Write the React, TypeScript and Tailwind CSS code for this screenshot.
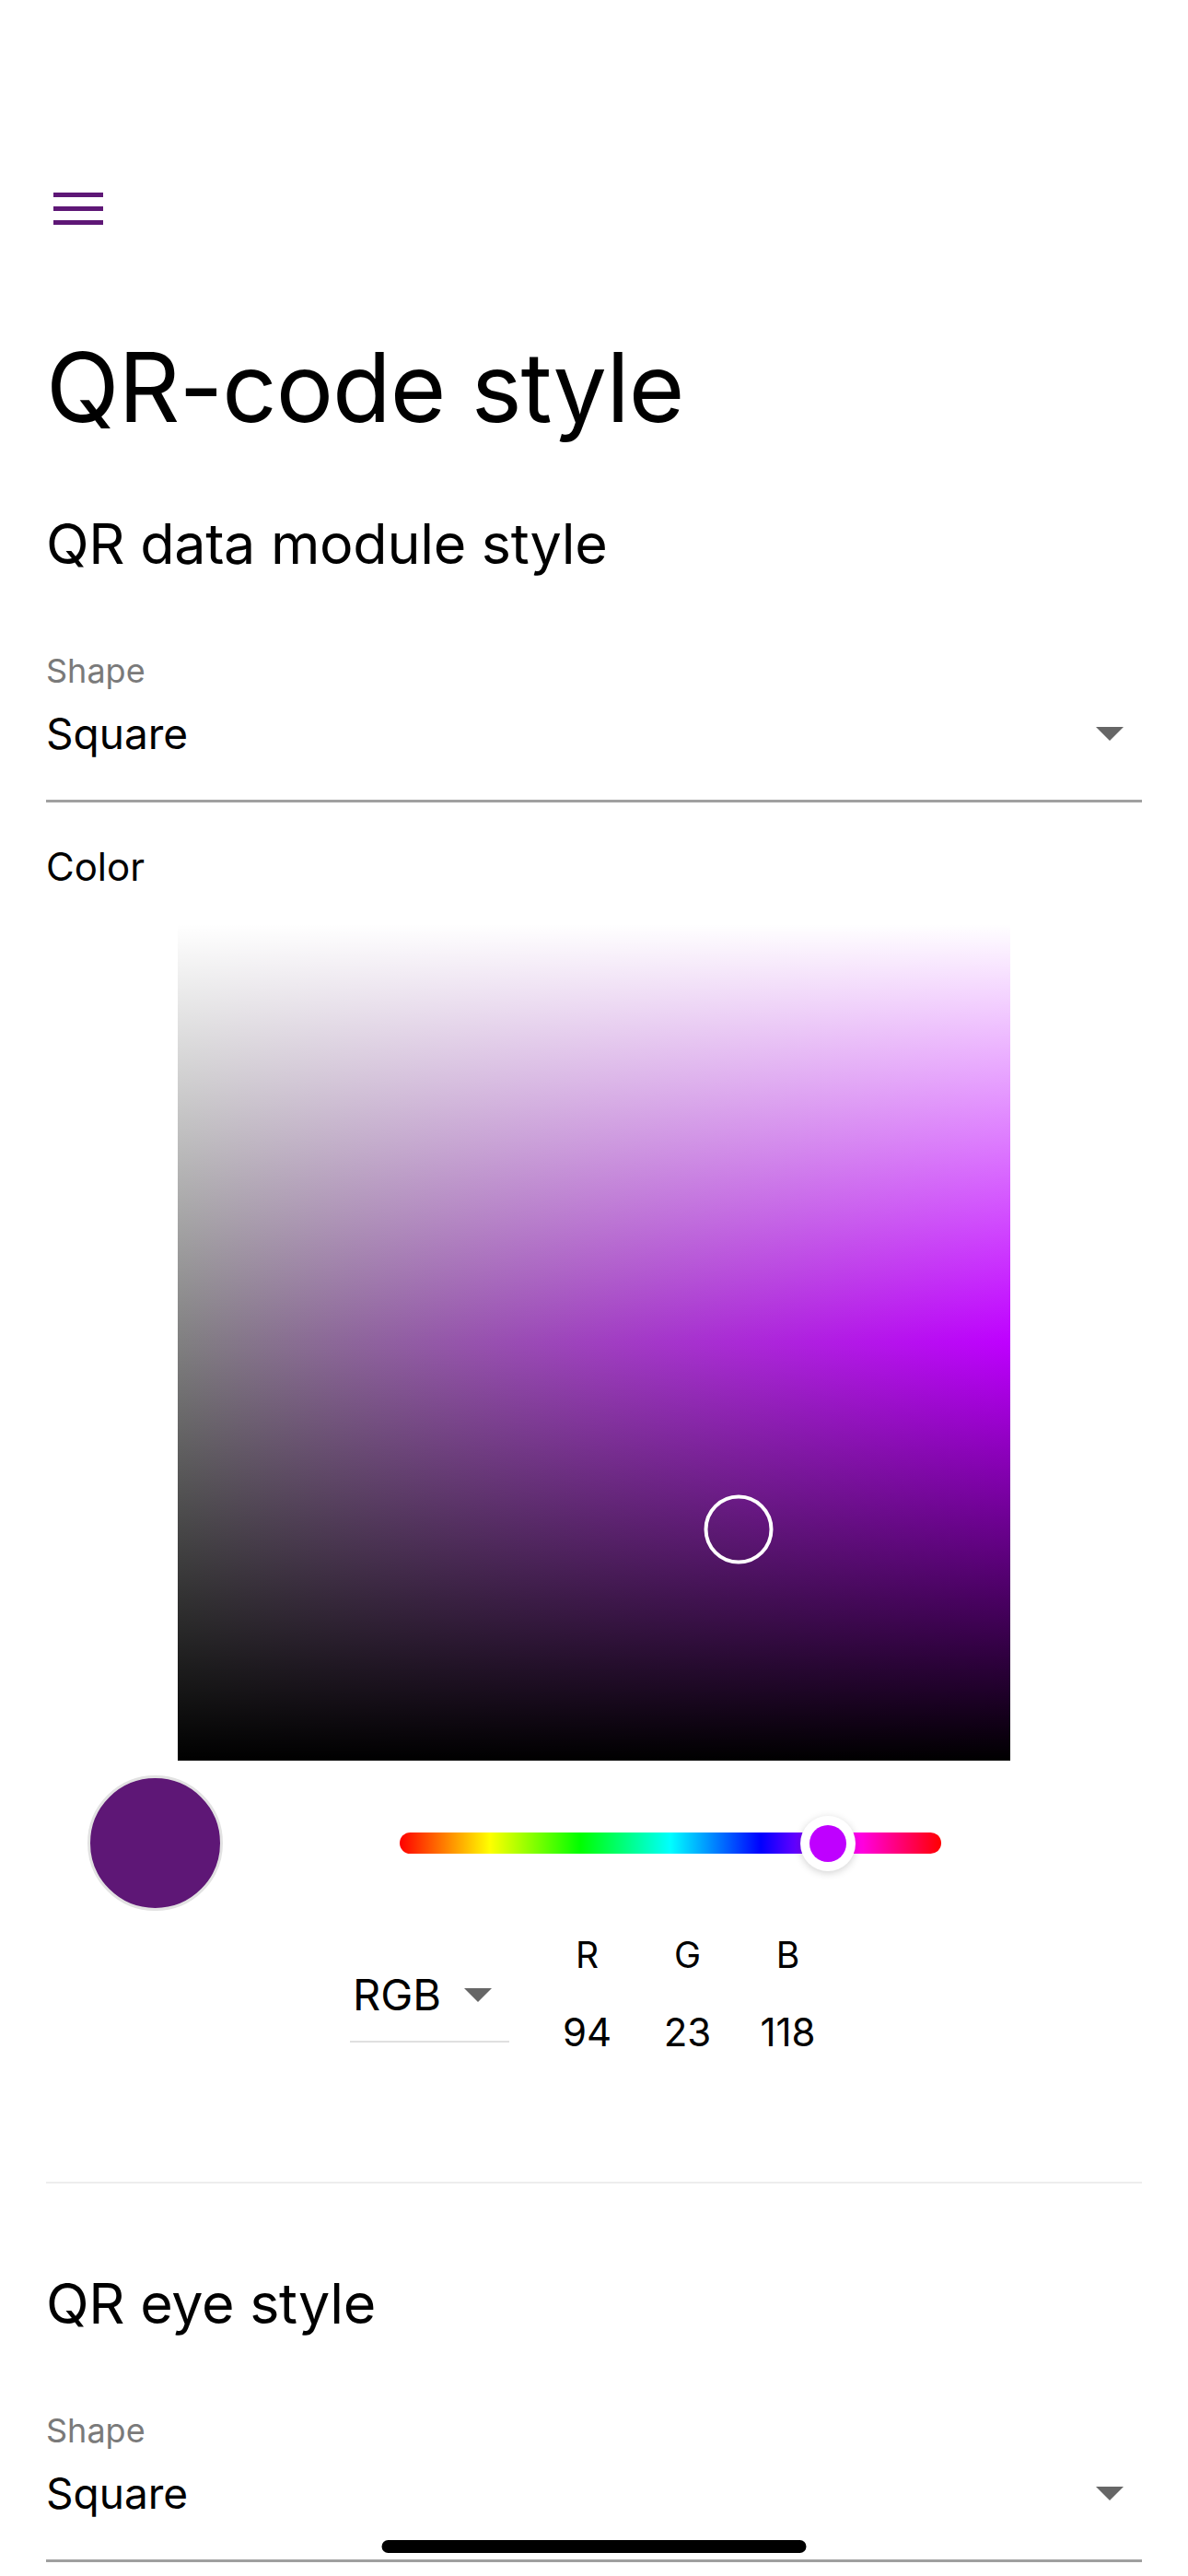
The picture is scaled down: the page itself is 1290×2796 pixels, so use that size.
import React from "react";

const picked = { r: 94, g: 23, b: 118 };

function toHsl(r: number, g: number, b: number) {
  const rn = r / 255;
  const gn = g / 255;
  const bn = b / 255;
  const max = Math.max(rn, gn, bn);
  const min = Math.min(rn, gn, bn);
  const l = (max + min) / 2;
  const d = max - min;
  let h = 0;
  let s = 0;
  if (d !== 0) {
    s = d / (1 - Math.abs(2 * l - 1));
    if (max === rn) h = 60 * (((gn - bn) / d) % 6);
    else if (max === gn) h = 60 * ((bn - rn) / d + 2);
    else h = 60 * ((rn - gn) / d + 4);
  }
  if (h < 0) h += 360;
  return { h, s, l };
}

function Caret() {
  return (
    <svg width="30" height="15" viewBox="0 0 30 15" className="shrink-0">
      <path d="M0 0 L30 0 L15 15 Z" fill="#666666" />
    </svg>
  );
}

function ShapeSelect() {
  return (
    <div>
      <div className="mt-[80px] text-[36px] leading-[43px] text-[#7a7a7a]">
        Shape
      </div>
      <div className="mt-[19px] flex items-center justify-between pr-[20px]">
        <span className="text-[46px] leading-[55px]">Square</span>
        <Caret />
      </div>
      <div className="mt-[44px] h-[3px] bg-[#a0a0a0]" />
    </div>
  );
}

export default function App() {
  const { h, s, l } = toHsl(picked.r, picked.g, picked.b);
  const hue = `hsl(${h}, 100%, 50%)`;

  return (
    <div className="relative min-h-[2796px] overflow-hidden bg-white font-['Inter',sans-serif] text-black">
      <div className="px-[50px] pt-[209px]">
        <button className="ml-[8px] flex w-[54px] flex-col gap-[10px]">
          <span className="h-[5px] w-full bg-[#5e1776]" />
          <span className="h-[5px] w-full bg-[#5e1776]" />
          <span className="h-[5px] w-full bg-[#5e1776]" />
        </button>

        <h1 className="mt-[114px] text-[104px] leading-[125px] tracking-[-1px]">
          QR-code style
        </h1>

        <h2 className="mt-[70px] text-[61px] leading-[74px] tracking-[-0.3px]">
          QR data module style
        </h2>

        <ShapeSelect />

        <div className="mt-[45px] text-[42px] leading-[50px]">Color</div>

        {/* saturation / lightness square */}
        <div
          className="relative mx-auto mt-[37px] h-[908px] w-[904px]"
          style={{
            background: `linear-gradient(to bottom, #ffffff 0%, rgba(255,255,255,0) 50%, rgba(0,0,0,0) 50%, #000000 100%), linear-gradient(to right, #808080, ${hue})`,
          }}
        >
          <div
            className="absolute h-[75px] w-[75px] -translate-x-1/2 -translate-y-1/2 rounded-full border-[4px] border-white"
            style={{ left: `${s * 100}%`, top: `${(1 - l) * 100}%` }}
          />
        </div>

        <div className="mt-[16px] flex items-center">
          <div
            className="ml-[45px] h-[147px] w-[147px] shrink-0 rounded-full border-[3px] border-[#e2e2e2]"
            style={{ backgroundColor: `rgb(${picked.r}, ${picked.g}, ${picked.b})` }}
          />
          <div className="relative ml-[192px] h-[23px] w-[588px] rounded-full bg-[linear-gradient(to_right,#ff0000,#ffff00,#00ff00,#00ffff,#0000ff,#ff00ff,#ff0000)]">
            <div
              className="absolute top-1/2 flex h-[60px] w-[60px] -translate-x-1/2 -translate-y-1/2 items-center justify-center rounded-full bg-white shadow-[0_2px_8px_rgba(0,0,0,0.18)]"
              style={{ left: `${(h / 360) * 100}%` }}
            >
              <div
                className="h-[40px] w-[40px] rounded-full"
                style={{ backgroundColor: hue }}
              />
            </div>
          </div>
        </div>

        <div className="mt-[25px] flex items-start justify-center">
          <div className="mt-[38px] w-[173px]">
            <div className="flex items-center gap-[25px] pl-[3px]">
              <span className="text-[47px] leading-[56px]">RGB</span>
              <Caret />
            </div>
            <div className="mt-[22px] h-[2px] bg-[#e0e0e0]" />
          </div>
          <div className="ml-[30px] flex">
            {[
              ["R", picked.r],
              ["G", picked.g],
              ["B", picked.b],
            ].map(([label, value]) => (
              <div key={label} className="w-[109px] text-center">
                <div className="text-[39px] leading-[46px]">{label}</div>
                <div className="mt-[36px] text-[42px] leading-[50px]">
                  {value}
                </div>
              </div>
            ))}
          </div>
        </div>

        <div className="mt-[137px] h-[2px] bg-[#ededed]" />

        <h2 className="mt-[93px] text-[61px] leading-[74px] tracking-[-0.3px]">
          QR eye style
        </h2>

        <ShapeSelect />
      </div>

      <div className="absolute bottom-[25px] left-1/2 h-[14px] w-[461px] -translate-x-1/2 rounded-full bg-black" />
    </div>
  );
}
